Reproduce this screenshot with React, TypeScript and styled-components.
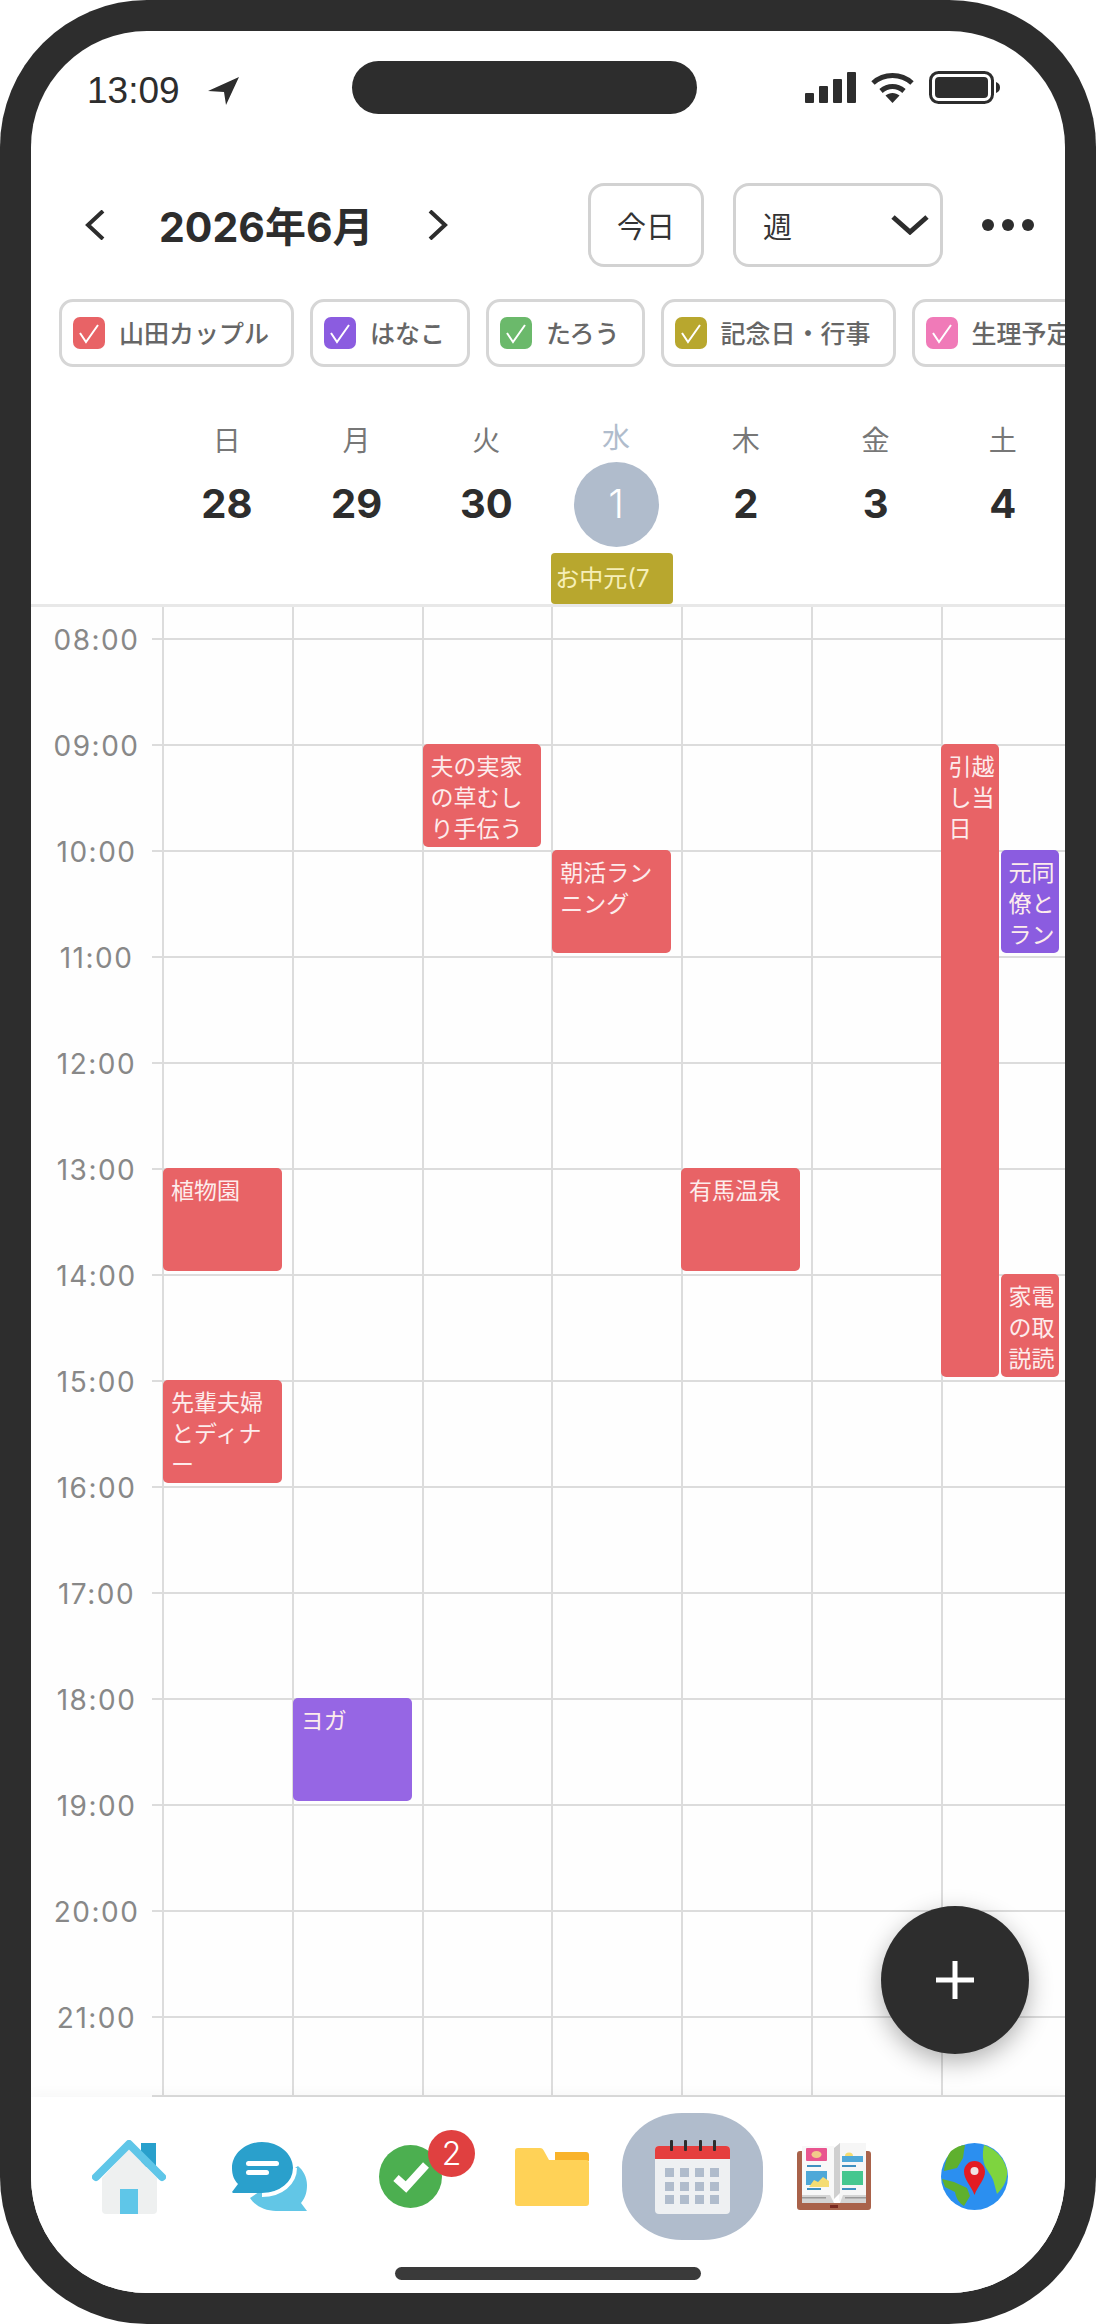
import React from 'react'
import styled, { createGlobalStyle } from 'styled-components'

const FONT = `"Inter", "Noto Sans CJK JP", sans-serif`
const COLUMNS = '131px repeat(6, 129.75px) 124.5px'
const LINE = '#dcdcdc'

const TONES: Record<string, string> = {
  red: '#e86366',
  purple: '#8b5ce0',
  violet: '#9666e4',
  green: '#6bb96b',
  olive: '#b8a72e',
  pink: '#f07ab8',
}

const GlobalStyle = createGlobalStyle`
  html, body {
    margin: 0;
    background: #fff;
    font-family: ${FONT};
  }
`

const FILTERS = [
  { label: '山田カップル', tone: 'red' },
  { label: 'はなこ', tone: 'purple' },
  { label: 'たろう', tone: 'green' },
  { label: '記念日・行事', tone: 'olive' },
  { label: '生理予定日', tone: 'pink' },
]

const DAYS = [
  { name: '日', num: '28' },
  { name: '月', num: '29' },
  { name: '火', num: '30' },
  { name: '水', num: '1', today: true },
  { name: '木', num: '2' },
  { name: '金', num: '3' },
  { name: '土', num: '4' },
]

const HOURS = ['08:00', '09:00', '10:00', '11:00', '12:00', '13:00', '14:00', '15:00', '16:00', '17:00', '18:00', '19:00', '20:00', '21:00']

// row 2 is the 08:00 row, column 2 is sunday
const EVENTS = [
  { text: '夫の実家の草むしり手伝う', row: 3, col: 4, span: 1, tone: 'red', left: 1, right: 10 },
  { text: '朝活ランニング', row: 4, col: 5, span: 1, tone: 'red', left: 1, right: 10 },
  { text: '引越し当日', row: 3, col: 8, span: 6, tone: 'red', left: 0, right: 66 },
  { text: '元同僚とラン', row: 4, col: 8, span: 1, tone: 'purple', left: 60, right: 6 },
  { text: '家電の取説読', row: 8, col: 8, span: 1, tone: 'red', left: 60, right: 6 },
  { text: '植物園', row: 7, col: 2, span: 1, tone: 'red', left: 1, right: 10 },
  { text: '有馬温泉', row: 7, col: 6, span: 1, tone: 'red', left: 0, right: 11 },
  { text: '先輩夫婦とディナー', row: 9, col: 2, span: 1, tone: 'red', left: 1, right: 10 },
  { text: 'ヨガ', row: 12, col: 3, span: 1, tone: 'violet', left: 1, right: 10 },
]

const ArrowIcon = () => (
  <svg width="31" height="28" viewBox="0 0 31 28">
    <path d="M31 0L0 14l16 1 2 13z" fill="#2d2d2d" />
  </svg>
)

const SignalIcon = () => (
  <svg width="51" height="31" viewBox="0 0 51 31" fill="#2d2d2d">
    <rect x="0" y="21" width="9" height="10" rx="1" />
    <rect x="14" y="14" width="9" height="17" rx="1" />
    <rect x="28" y="7" width="9" height="24" rx="1" />
    <rect x="42" y="0" width="9" height="31" rx="1" />
  </svg>
)

const WifiIcon = () => (
  <svg width="43" height="31" viewBox="0 0 43 31" fill="none" stroke="#2d2d2d" strokeWidth="5">
    <path d="M2 11C13 1 30 1 41 11" />
    <path d="M10 19c7-6 16-6 23 0" />
    <path d="M14.5 23.5L21.5 31l7-7.500c-4-3.500-10-3.500-14 0z" fill="#2d2d2d" stroke="none" />
  </svg>
)

const BatteryIcon = () => (
  <svg width="71" height="33" viewBox="0 0 71 33">
    <rect x="1.500" y="1.500" width="62" height="30" rx="8" fill="none" stroke="#2d2d2d" strokeWidth="3" />
    <rect x="6" y="6" width="53" height="21" rx="4" fill="#2d2d2d" />
    <path d="M67 11c3 1 4 3 4 5.500s-1 4.500-4 5.500z" fill="#2d2d2d" />
  </svg>
)

const ChevronIcon = ({ flip }: { flip?: boolean }) => (
  <svg width="20" height="30" viewBox="0 0 20 30" fill="none" stroke="#2d2d2d" strokeWidth="4">
    <path d={flip ? 'M2 1l15 14L2 29' : 'M18 1L3 15l15 14'} />
  </svg>
)

const CheckMark = () => (
  <svg width="32" height="32" viewBox="0 0 32 32" fill="none" stroke="#fff" strokeWidth="2">
    <path d="M7 16l6 9 12-17" />
  </svg>
)

const HomeIcon = () => (
  <svg width="74" height="74" viewBox="0 0 74 74">
    <rect x="49" y="3" width="15" height="24" fill="#28a0cc" />
    <path d="M10 38L37 9l28 29v32a4 4 0 0 1-4 4H14a4 4 0 0 1-4-4z" fill="#eef0f0" />
    <rect x="28" y="49" width="18" height="25" fill="#5fc6e8" />
    <path d="M4 37L37 4l33 33" fill="none" stroke="#5fc6e8" strokeWidth="8" strokeLinecap="round" strokeLinejoin="round" />
  </svg>
)

const ChatIcon = () => (
  <svg width="75" height="70" viewBox="0 0 75 70">
    <path d="M18 56c5 8 15 13 26 13h31l-6-8c5-6 6-12 6-18 0-8-4-15-9-19z" fill="#62c6e6" />
    <path d="M30 0C13 0 0 12 0 26c0 7 2 12 6 16l-6 8 1 1h29c18 0 31-11 31-25S47 0 30 0z" fill="#2aa0cc" />
    <path d="M30 53c19 0 33-12 33-27" fill="none" stroke="#fff" strokeWidth="4" />
    <rect x="14" y="19" width="33" height="5" rx="2.500" fill="#fff" />
    <rect x="14" y="28" width="23" height="5" rx="2.500" fill="#fff" />
  </svg>
)

const TaskIcon = () => (
  <svg width="63" height="63" viewBox="0 0 63 63">
    <circle cx="31.500" cy="31.500" r="31.500" fill="#4caf50" />
    <path d="M17 33l10 9 20-22" fill="none" stroke="#fff" strokeWidth="8" strokeLinejoin="miter" />
  </svg>
)

const FolderIcon = () => (
  <svg width="74" height="58" viewBox="0 0 74 58">
    <path d="M40 4h31a3 3 0 0 1 3 3v6H40z" fill="#f9b32a" />
    <path d="M0 3a3 3 0 0 1 3-3h22c2 0 3 1 4 3l5 9h37a3 3 0 0 1 3 3v40a3 3 0 0 1-3 3H3a3 3 0 0 1-3-3z" fill="#ffd257" />
  </svg>
)

const CalendarIcon = () => (
  <svg width="75" height="74" viewBox="0 0 75 74">
    <rect x="0" y="6" width="75" height="68" rx="4" fill="#eef0f2" />
    <path d="M0 19V10a4 4 0 0 1 4-4h67a4 4 0 0 1 4 4v9z" fill="#e53e3e" />
    {[15, 29, 44, 58].map(x => (
      <rect key={x} x={x} y="0" width="3" height="11" rx="1" fill="#2d2d2d" />
    ))}
    {[28, 42, 55].flatMap(y =>
      [10, 25, 40, 55].map(x => <rect key={`${x}-${y}`} x={x} y={y} width="9" height="9" fill="#b0bccc" />),
    )}
  </svg>
)

const BookIcon = () => (
  <svg width="74" height="67" viewBox="0 0 74 67">
    <path d="M0 11a3 3 0 0 1 3-3h2v52h64V8h2a3 3 0 0 1 3 3v53a3 3 0 0 1-3 3H3a3 3 0 0 1-3-3z" fill="#a9624a" />
    <rect x="5" y="3" width="32" height="55" fill="#f8f8f8" />
    <rect x="42" y="0" width="27" height="58" fill="#f6f6f6" />
    <path d="M37 5l6-5v50l-6 6z" fill="#cfcfcf" />
    <path d="M5 52h28l4 8h6l3-8h23v8H5z" fill="#d4d4d4" />
    <rect x="5" y="54" width="24" height="1.500" fill="#9a9a9a" />
    <rect x="48" y="54" width="21" height="1.500" fill="#9a9a9a" />
    <rect x="9" y="5" width="21" height="13" rx="1" fill="#e9558f" />
    <ellipse cx="19.500" cy="11.500" rx="5" ry="3.500" fill="#f2c98a" />
    <rect x="10" y="22" width="14" height="2" fill="#3f8fc0" />
    <rect x="9" y="28" width="21" height="14" fill="#4fa8d8" />
    <path d="M12 44l5-7 4 2 5-5 6 4v6z" fill="#f5dc72" />
    <rect x="10" y="45" width="14" height="2" fill="#3f8fc0" />
    <path d="M48 13a4 3.500 0 0 1 8 0z" fill="#f5dc72" />
    <rect x="45" y="13" width="21" height="6" fill="#4fa8d8" />
    <rect x="45" y="22" width="14" height="2" fill="#3f8fc0" />
    <rect x="45" y="28" width="21" height="14" fill="#45c78f" />
    <rect x="45" y="45" width="14" height="2" fill="#3f8fc0" />
    <rect x="33" y="62" width="8" height="3" fill="#7a2a20" />
  </svg>
)

const GlobeIcon = () => (
  <svg width="67" height="67" viewBox="0 0 67 67">
    <circle cx="33.500" cy="33.500" r="33.500" fill="#2b8ff0" />
    <path d="M43 2c12 4 20 13 23 25 1 9-3 17-10 24l-3-11c-1-6-6-11-9-17-2-5-3-12-1-21z" fill="#7ed43f" />
    <path d="M10 8c5-4 10-6 14-6l-1 6-1 7-6 10-13 3C4 20 6 13 10 8z" fill="#5fb02e" />
    <path d="M1 36l12 3 13 6 3 8-6 10c-5-3-8-8-9-14L4 44z" fill="#5fb02e" />
    <path d="M33.500 18c6 0 10.500 5 10.500 10.500 0 8-7 14-10.500 23.500C30 42.500 23 36.500 23 28.500 23 23 27.500 18 33.500 18z" fill="#e31b23" />
    <circle cx="33.500" cy="28" r="4" fill="#f0e4e4" />
  </svg>
)

const NAV_ITEMS = [
  { key: 'home', icon: <HomeIcon /> },
  { key: 'chat', icon: <ChatIcon /> },
  { key: 'task', icon: <TaskIcon />, badge: '2' },
  { key: 'folder', icon: <FolderIcon /> },
  { key: 'calendar', icon: <CalendarIcon />, active: true },
  { key: 'book', icon: <BookIcon /> },
  { key: 'globe', icon: <GlobeIcon /> },
]

const App = () => {
  return (
    <>
      <GlobalStyle />
      <Phone>
        <Screen>
          <StatusBar>
            <StatusLeft>
              <Clock>13:09</Clock>
              <ArrowIcon />
            </StatusLeft>
            <Island />
            <StatusRight>
              <SignalIcon />
              <WifiIcon />
              <BatteryIcon />
            </StatusRight>
          </StatusBar>

          <Toolbar>
            <MonthNav>
              <ChevronIcon />
              <Month>2026年6月</Month>
              <ChevronIcon flip />
            </MonthNav>
            <Actions>
              <TodayButton>今日</TodayButton>
              <ViewSelect>
                週
                <svg width="38" height="20" viewBox="0 0 38 20" fill="none" stroke="#2d2d2d" strokeWidth="5">
                  <path d="M2 2l17 15L36 2" />
                </svg>
              </ViewSelect>
              <MoreDots>
                <Dot />
                <Dot />
                <Dot />
              </MoreDots>
            </Actions>
          </Toolbar>

          <FilterRow>
            {FILTERS.map(f => (
              <FilterChip key={f.label}>
                <CheckBox $tone={f.tone}>
                  <CheckMark />
                </CheckBox>
                {f.label}
              </FilterChip>
            ))}
          </FilterRow>

          <WeekHead>
            <span />
            {DAYS.map(d => (
              <DayHead key={d.name}>
                <DayName $today={d.today}>{d.name}</DayName>
                <DayNumber $today={d.today}>{d.num}</DayNumber>
              </DayHead>
            ))}
            <AllDayEvent>お中元(7</AllDayEvent>
          </WeekHead>

          <Timeline>
            {['', ...HOURS, ''].flatMap((hour, r) => [
              <Gutter key={`g${r}`} $row={r + 1} $lined={r > 0}>
                {hour && <HourLabel>{hour}</HourLabel>}
              </Gutter>,
              ...DAYS.map((_, c) => <Cell key={`${r}-${c}`} $row={r + 1} $col={c + 2} $lined={r > 0} />),
            ])}
            {EVENTS.map(e => (
              <EventCard
                key={e.text}
                $row={e.row}
                $col={e.col}
                $span={e.span}
                $tone={e.tone}
                $left={e.left}
                $right={e.right}
              >
                {e.text}
              </EventCard>
            ))}
          </Timeline>

          <AddButton>
            <svg width="38" height="38" viewBox="0 0 38 38" stroke="#fff" strokeWidth="5">
              <path d="M19 0v38M0 19h38" />
            </svg>
          </AddButton>

          <BottomNav>
            <NavRow>
              {NAV_ITEMS.map(item => (
                <NavItem key={item.key} $active={item.active}>
                  <NavIcon>
                    {item.icon}
                    {item.badge && <Badge>{item.badge}</Badge>}
                  </NavIcon>
                </NavItem>
              ))}
            </NavRow>
            <HomeBar />
          </BottomNav>
        </Screen>
      </Phone>
    </>
  )
}

export default App

const Phone = styled.div`
  box-sizing: border-box;
  width: 1096px;
  height: 2324px;
  padding: 31px;
  background: #2d2d2d;
  border-radius: 147px;
`
const Screen = styled.div`
  position: relative;
  display: flex;
  flex-direction: column;
  height: 100%;
  background: #fff;
  border-radius: 116px;
  overflow: hidden;
`
const StatusBar = styled.div`
  display: flex;
  align-items: center;
  padding: 30px 65px 0 56px;
`
const StatusLeft = styled.div`
  flex-shrink: 0;
  display: flex;
  align-items: center;
  gap: 28px;
  width: 265px;
  margin-top: 6px;
`
const Clock = styled.span`
  font-family: "Liberation Sans", sans-serif;
  font-size: 37px;
  color: #2d2d2d;
`
const Island = styled.div`
  width: 345px;
  height: 53px;
  margin-right: auto;
  background: #2d2d2d;
  border-radius: 27px;
`
const StatusRight = styled.div`
  display: flex;
  align-items: center;
  gap: 15px;
`
const Toolbar = styled.div`
  display: flex;
  align-items: center;
  justify-content: space-between;
  margin-top: 69px;
  padding: 0 31px 0 54px;
`
const MonthNav = styled.div`
  display: flex;
  align-items: center;
  gap: 54px;
`
const Month = styled.h1`
  margin: 3px 0 0;
  font-size: 41px;
  font-weight: 700;
  line-height: 56px;
  color: #2d2d2d;
`
const Actions = styled.div`
  display: flex;
  align-items: center;
`
const TodayButton = styled.button`
  box-sizing: border-box;
  width: 116px;
  height: 84px;
  padding: 0;
  background: #fff;
  border: 3px solid #d2d2d2;
  border-radius: 16px;
  font-family: ${FONT};
  font-size: 29px;
  color: #333;
`
const ViewSelect = styled.div`
  box-sizing: border-box;
  display: flex;
  align-items: center;
  justify-content: space-between;
  width: 210px;
  height: 84px;
  margin-left: 29px;
  padding: 0 11px 0 27px;
  border: 3px solid #d2d2d2;
  border-radius: 16px;
  font-size: 29px;
  color: #333;
`
const MoreDots = styled.div`
  display: flex;
  gap: 8px;
  margin-left: 39px;
`
const Dot = styled.span`
  width: 12px;
  height: 12px;
  background: #2d2d2d;
  border-radius: 50%;
`
const FilterRow = styled.div`
  display: flex;
  gap: 16px;
  margin-top: 32px;
  padding-left: 28px;
  overflow: hidden;
`
const FilterChip = styled.div`
  box-sizing: border-box;
  flex-shrink: 0;
  display: flex;
  align-items: center;
  gap: 14px;
  height: 68px;
  padding: 0 22px 3px 11px;
  border: 3px solid #d6d6d6;
  border-radius: 14px;
  font-size: 25px;
  font-weight: 500;
  color: #666;
`
const CheckBox = styled.span<{ $tone: string }>`
  display: flex;
  width: 32px;
  height: 32px;
  margin-top: 3px;
  background: ${p => TONES[p.$tone]};
  border-radius: 7px;
`
const WeekHead = styled.div`
  display: grid;
  grid-template-columns: ${COLUMNS};
  grid-template-rows: auto 51px;
  row-gap: 6px;
  padding-top: 58px;
  border-bottom: 3px solid #e8e8e8;
`
const DayHead = styled.div`
  display: flex;
  flex-direction: column;
  align-items: center;
`
const DayName = styled.span<{ $today?: boolean }>`
  margin: ${p => (p.$today ? '-3px 0 8px' : '0 0 5px')};
  font-size: 28px;
  line-height: 32px;
  color: ${p => (p.$today ? '#b0bccc' : '#777')};
`
const DayNumber = styled.span<{ $today?: boolean }>`
  box-sizing: border-box;
  display: flex;
  align-items: center;
  justify-content: center;
  width: 85px;
  height: 85px;
  padding-bottom: 2px;
  border-radius: 50%;
  font-size: 40px;
  font-weight: ${p => (p.$today ? 300 : 700)};
  background: ${p => (p.$today ? '#b0bccc' : 'transparent')};
  color: ${p => (p.$today ? '#fff' : '#2d2d2d')};
`
const AllDayEvent = styled.div`
  grid-row: 2;
  grid-column: 5;
  width: 122px;
  padding-left: 4px;
  box-sizing: border-box;
  background: ${TONES.olive};
  border-radius: 4px;
  font-size: 24px;
  line-height: 51px;
  color: #f6efb8;
  white-space: nowrap;
  overflow: hidden;
`
const Timeline = styled.div`
  display: grid;
  grid-template-columns: ${COLUMNS};
  grid-template-rows: 31px repeat(13, 106px) 79px;
  background: #fefefe;
  overflow: hidden;
`
const Gutter = styled.div<{ $row: number; $lined: boolean }>`
  grid-row: ${p => p.$row};
  grid-column: 1;
  text-align: center;
  background: ${p => (p.$lined ? `linear-gradient(${LINE}, ${LINE}) right top / 10px 2px no-repeat` : 'none')};
`
const HourLabel = styled.span`
  display: block;
  font-size: 28px;
  line-height: 32px;
  letter-spacing: 1.500px;
  color: #888;
  transform: translateY(-14px);
`
const Cell = styled.div<{ $row: number; $col: number; $lined: boolean }>`
  grid-row: ${p => p.$row};
  grid-column: ${p => p.$col};
  border-left: 2px solid ${LINE};
  border-top: ${p => (p.$lined ? `2px solid ${LINE}` : 'none')};
`
const EventCard = styled.div<{ $row: number; $col: number; $span: number; $tone: string; $left: number; $right: number }>`
  grid-row: ${p => p.$row} / span ${p => p.$span};
  grid-column: ${p => p.$col};
  z-index: 1;
  margin: 0 ${p => p.$right}px 3px ${p => p.$left}px;
  padding: 8px 3px 0 8px;
  background: ${p => TONES[p.$tone]};
  border-radius: 5px;
  font-size: 23px;
  line-height: 31px;
  color: #fdecec;
  line-break: anywhere;
  overflow: hidden;
`
const AddButton = styled.button`
  position: absolute;
  right: 36px;
  bottom: 239px;
  z-index: 2;
  display: flex;
  align-items: center;
  justify-content: center;
  width: 148px;
  height: 148px;
  padding: 0;
  background: #2d2d2d;
  border: none;
  border-radius: 50%;
  box-shadow: 0 8px 24px rgba(0, 0, 0, 0.3);
`
const BottomNav = styled.nav`
  position: relative;
  z-index: 1;
  flex: 1;
  background: #fff;
  box-shadow: 0 -6px 10px rgba(0, 0, 0, 0.025);
`
const NavRow = styled.div`
  display: grid;
  grid-template-columns: repeat(7, 141px);
  padding: 16px 0 0 27px;
`
const NavItem = styled.div<{ $active?: boolean }>`
  display: flex;
  align-items: center;
  justify-content: center;
  height: 127px;
  background: ${p => (p.$active ? '#b0bccc' : 'transparent')};
  border-radius: 60px / 54px;
`
const NavIcon = styled.div`
  position: relative;
  display: flex;
`
const Badge = styled.span`
  position: absolute;
  top: -15px;
  right: -33px;
  display: flex;
  align-items: center;
  justify-content: center;
  width: 47px;
  height: 47px;
  background: #e04040;
  border-radius: 50%;
  font-size: 32px;
  font-weight: 300;
  color: #fff;
`
const HomeBar = styled.div`
  width: 306px;
  height: 13px;
  margin: 27px auto 0;
  background: #3a3a3a;
  border-radius: 7px;
`
